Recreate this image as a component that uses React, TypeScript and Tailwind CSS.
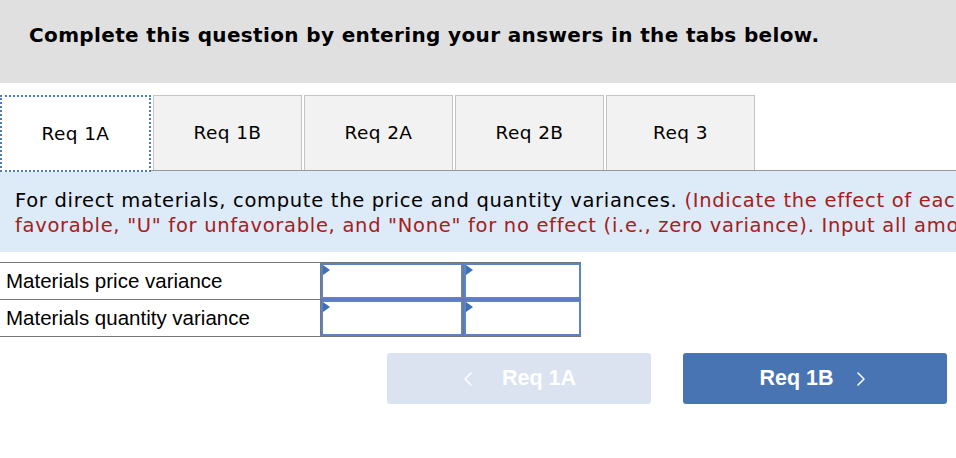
import { ChevronLeft, ChevronRight } from 'lucide-react'
import { clsx } from 'clsx'

const tabs = ['Req 1A', 'Req 1B', 'Req 2A', 'Req 2B', 'Req 3']

const rows = ['Materials price variance', 'Materials quantity variance']

function InputCell({ wide }: { wide?: boolean }) {
  return (
    <td className={clsx('p-0 border-l border-[#777] h-[37px]', wide ? 'w-[143px]' : 'w-[118px]')}>
      <div className="relative h-full border-2 border-[#5a84c3] bg-white">
        {/* dropdown marker */}
        <span className="absolute left-0 top-0 w-0 h-0 border-y-[5px] border-y-transparent border-l-[7px] border-l-[#3f6fb5]" />
      </div>
    </td>
  )
}

export default function App() {
  return (
    <div className="w-[956px] h-[458px] bg-white overflow-hidden font-['DejaVu_Sans',sans-serif] text-black">
      {/* Header */}
      <div className="h-[83px] bg-[#e0e0e0] flex items-center pl-[29px] pb-[13px]">
        <h1 className="text-[20px] font-bold tracking-[0.36px]">
          Complete this question by entering your answers in the tabs below.
        </h1>
      </div>

      {/* Tabs */}
      <div className="mt-[12px] flex gap-[2px] border-b border-[#999] h-[76px]">
        {tabs.map((t, i) => (
          <div
            key={t}
            className={clsx(
              'flex items-center justify-center text-[18.5px] tracking-[0.4px] h-[75px]',
              i === 0
                ? 'w-[151px] bg-white border-2 border-dotted border-[#4a7cc4] h-[77px]'
                : 'w-[149px] bg-[#f2f2f2] border border-[#c4c4c4] border-b-0'
            )}
          >
            {t}
          </div>
        ))}
      </div>

      {/* Instructions */}
      <div className="bg-[#ddeaf7] h-[81px] pl-[15px] pt-[17px] text-[19.5px] tracking-[0.7px] leading-[25px] whitespace-nowrap overflow-hidden">
        For direct materials, compute the price and quantity variances.{' '}
        <span className="text-[#a3201c]">
          (Indicate the effect of each variance by selecting "F" for
        </span>
        <br />
        <span className="text-[#a3201c]">
          favorable, "U" for unfavorable, and "None" for no effect (i.e., zero variance). Input all amounts as positive values.)
        </span>
      </div>

      {/* Table */}
      <table className="mt-[10px] border-collapse font-['Liberation_Sans',Arial,sans-serif] text-[20.5px]">
        <tbody>
          {rows.map((r) => (
            <tr key={r} className="border-y border-[#777]">
              <td className="w-[320px] pl-[6px] h-[37px] p-0 leading-none">{r}</td>
              <InputCell wide />
              <InputCell />
            </tr>
          ))}
        </tbody>
      </table>

      {/* Navigation */}
      <div className="mt-[16px] flex gap-[32px] pl-[387px] font-['Liberation_Sans',Arial,sans-serif] font-bold text-[21.5px] text-white">
        <button className="w-[264px] h-[51px] rounded-[3px] bg-[#dae3ef] flex items-center justify-center gap-[22px] pr-[6px]">
          <ChevronLeft className="w-[24px] h-[24px]" strokeWidth={1.5} />
          <span>Req 1A</span>
        </button>
        <button className="w-[264px] h-[51px] rounded-[3px] bg-[#4874b3] flex items-center justify-center gap-[15px] pl-[2px]">
          <span>Req 1B</span>
          <ChevronRight className="w-[24px] h-[24px]" strokeWidth={1.5} />
        </button>
      </div>
    </div>
  )
}
